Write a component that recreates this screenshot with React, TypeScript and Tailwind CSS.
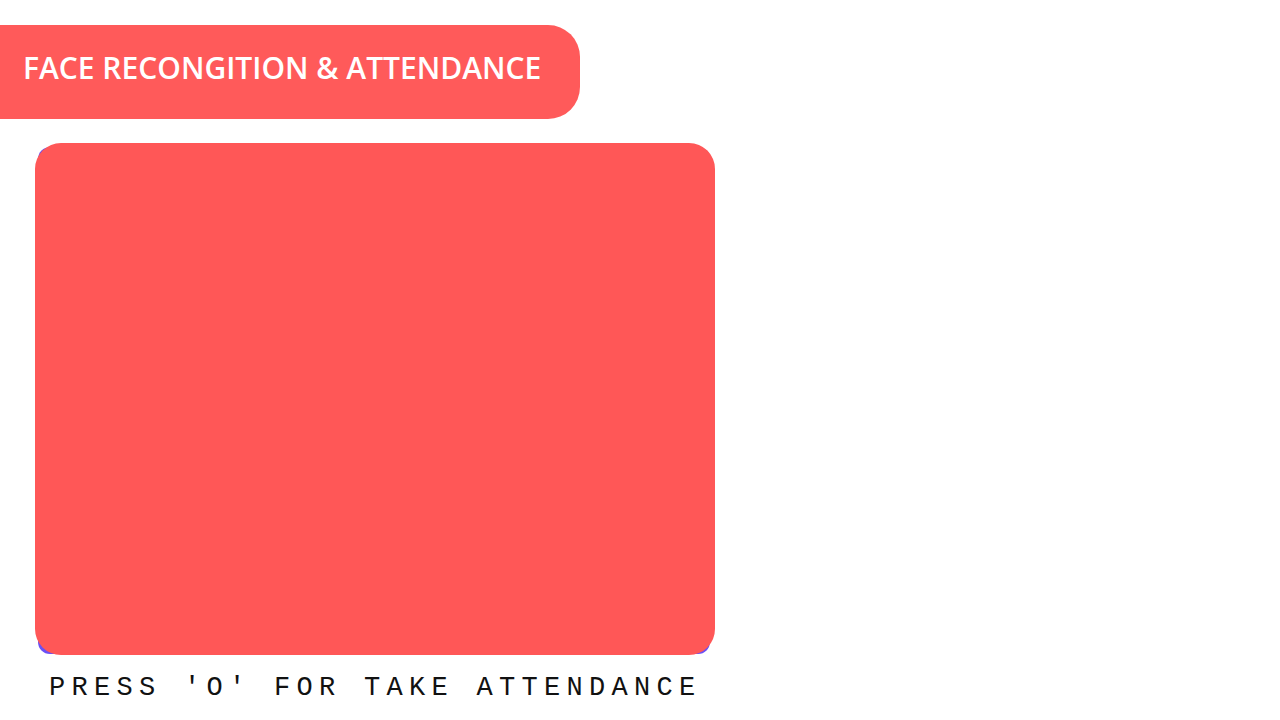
import React from 'react';

const App: React.FC = () => {
  return (
    <div className="w-[1280px] h-[720px] bg-white overflow-hidden pt-[25px]">
      {/* Title bar */}
      <div className="w-[580px] h-[94px] bg-[#ff5a5a] rounded-r-[32px] flex items-center pl-[23px] pb-[8px]">
        <h1 className="text-white font-semibold text-[30px] font-['Open_Sans',sans-serif] leading-none">
          FACE RECONGITION &amp; ATTENDANCE
        </h1>
      </div>

      {/* Camera frame */}
      <div className="ml-[35px] mt-[24px] w-[680px] h-[512px] relative">
        <div className="absolute left-[3px] right-[5px] top-[4px] bottom-[1px] bg-[#6a4ff5] rounded-[12px]"></div>
        <div className="absolute inset-0 bg-[#ff5757] rounded-[26px]"></div>
      </div>

      {/* Hint */}
      <p className="ml-[49px] mt-[20px] font-['Liberation_Mono',monospace] text-[27px] leading-none tracking-[6.3px] text-[#111]">
        PRESS 'O' FOR TAKE ATTENDANCE
      </p>
    </div>
  );
};

export default App;
